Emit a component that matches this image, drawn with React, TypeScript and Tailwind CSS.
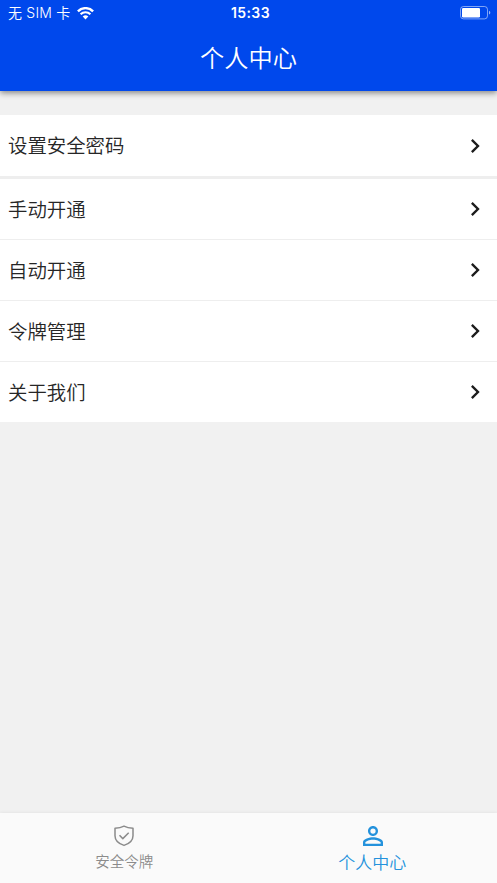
import { MdChevronRight, MdPersonOutline } from "react-icons/md";

interface MenuItem {
  label: string;
  spacing: string;
}

const menuItems: MenuItem[] = [
  { label: "设置安全密码", spacing: "h-[64px] border-b-[3px]" },
  { label: "手动开通", spacing: "h-[61px] border-b" },
  { label: "自动开通", spacing: "h-[61px] border-b" },
  { label: "令牌管理", spacing: "h-[61px] border-b" },
  { label: "关于我们", spacing: "h-[60px]" },
];

const WifiIcon = () => (
  <svg width="17" height="13" viewBox="0 0 17 13" fill="none">
    <path d="M0.9 4.3a10.7 10.7 0 0 1 15.2 0" stroke="white" strokeWidth="2.4" />
    <path d="M3.6 7.3a6.9 6.9 0 0 1 9.8 0" stroke="white" strokeWidth="2.2" />
    <path d="M5.7 9.5a4 4 0 0 1 5.6 0L8.5 12.4z" fill="white" />
  </svg>
);

const BatteryIcon = () => (
  <svg width="31" height="14" viewBox="0 0 31 14" fill="none">
    <rect x="0.5" y="0.5" width="27" height="12.4" rx="3" stroke="white" strokeOpacity="0.5" />
    <rect x="2" y="2" width="18" height="9.4" rx="1.2" fill="white" />
    <path d="M29 4.8c1.8.6 1.8 3.2 0 3.8z" fill="white" fillOpacity="0.6" />
  </svg>
);

const ShieldIcon = () => (
  <svg width="20" height="22" viewBox="0 0 20 22" fill="none" stroke="#8b8b8b" strokeWidth="1.5" strokeLinejoin="round">
    <path d="M10 1.2c2.4 1.3 5.4 2 9 2.1v7.4c0 4.7-3.6 7.9-9 9.7-5.4-1.8-9-5-9-9.7V3.3c3.6-.1 6.600-.8 9-2.100z" />
    <path d="M5.5 10.3l3.3 3.3 5.9-5.8" />
  </svg>
);

const StatusBar = () => (
  <div className="grid h-[26px] grid-cols-3 items-center pl-2 pr-[6px]">
    <div className="flex items-center gap-[7px] whitespace-nowrap text-[14px] leading-none">
      <span className="tracking-[0.2px]">无 SIM 卡</span>
      <WifiIcon />
    </div>
    <span className="pl-[2px] text-center font-[Inter] text-[14px] font-semibold leading-none tracking-[0.4px]">
      15:33
    </span>
    <div className="flex justify-end">
      <BatteryIcon />
    </div>
  </div>
);

const App = () => {
  return (
    <div className="flex h-screen flex-col overflow-hidden bg-[#f1f1f1] font-['Inter','Noto_Sans_CJK_SC',sans-serif] font-[350]">
      <header className="relative h-[91px] shrink-0 bg-[#0048ec] text-white shadow-[0_2px_6px_rgba(0,0,0,0.45)]">
        <StatusBar />
        <h1 className="flex h-[65px] items-center justify-center pt-px text-[24.2px]">个人中心</h1>
      </header>

      <main className="flex-1 pt-6">
        {menuItems.map((item) => (
          <button
            key={item.label}
            className={`flex w-full items-center justify-between border-[#eeeeee] bg-white px-2 text-left text-[19.4px] text-[#262626] ${item.spacing}`}
          >
            <span className="pt-[3px]">{item.label}</span>
            <MdChevronRight size={28} color="#1c1c1c" />
          </button>
        ))}
      </main>

      <nav className="grid h-[70px] shrink-0 grid-cols-2 bg-[#fafafa] shadow-[0_-1px_3px_rgba(0,0,0,0.05)]">
        <button className="flex flex-col items-center pt-3 text-[#8b8b8b]">
          <ShieldIcon />
          <span className="mt-[5px] text-[14.5px] leading-5">安全令牌</span>
        </button>
        <button className="flex flex-col items-center pt-2 text-[#2492dc]">
          <MdPersonOutline size={30} />
          <span className="mt-[2px] pr-px text-[17px] leading-5">个人中心</span>
        </button>
      </nav>
    </div>
  );
};

export default App;
